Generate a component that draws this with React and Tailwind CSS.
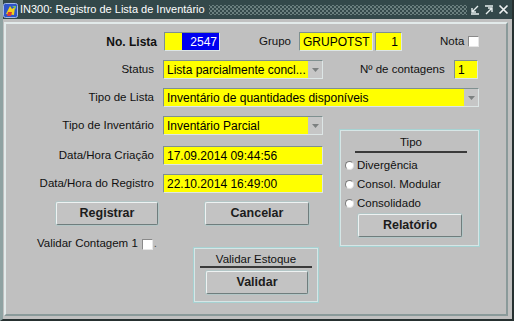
import React from 'react';

const fieldBorder = 'border border-t-[#7f9090] border-l-[#7f9090] border-b-[#dde6e6] border-r-[#dde6e6]';

function Field({ w, children, right }) {
  return (
    <div className={`${w} h-[19px] ${fieldBorder} bg-[#ffff00] flex items-center px-[3px] text-[12px] text-black whitespace-nowrap overflow-hidden ${right ? 'justify-end' : ''}`}>
      {children}
    </div>
  );
}

function Select({ w, children }) {
  return (
    <div className={`${w} h-[19px] ${fieldBorder} flex`}>
      <div className="flex-1 bg-[#ffff00] flex items-center px-[3px] text-[12px] text-black whitespace-nowrap overflow-hidden">
        {children}
      </div>
      <div className="w-[14px] bg-[#c6c6c6] flex items-center justify-center">
        <svg width="7" height="4" viewBox="0 0 7 4"><path d="M0 0h7L3.5 4z" fill="#7c8080" /></svg>
      </div>
    </div>
  );
}

function Btn({ w, children }) {
  return (
    <div className={`${w} h-[23px] bg-[#c3c3c3] rounded-[2px] border border-t-[#eef2f2] border-l-[#eef2f2] border-b-[#6f7d7d] border-r-[#6f7d7d] shadow-[0_0_0_1px_#b3c6c6] flex items-center justify-center font-bold text-[12.5px] text-[#1c1c1c]`}>
      {children}
    </div>
  );
}

function Check() {
  return <div className="w-[11px] h-[11px] bg-white border border-t-[#8a8a8a] border-l-[#8a8a8a] border-b-[#e6e6e6] border-r-[#e6e6e6]" />;
}

function Radio({ label }) {
  return (
    <div className="h-[19px] flex items-center pl-[5px]">
      <div className="w-[9px] h-[9px] rounded-full bg-white border border-t-[#7a7a7a] border-l-[#7a7a7a] border-b-[#e0e0e0] border-r-[#e0e0e0]" />
      <span className="ml-[3px] text-[11.5px] text-[#111]">{label}</span>
    </div>
  );
}

function TitleIcon() {
  return (
    <svg width="15" height="15" viewBox="0 0 15 15">
      <rect x="0.5" y="0.5" width="14" height="14" rx="2" fill="#2f55c8" stroke="#a0b8e8" />
      <path d="M3 11 L7 3 L9 6 L12 4 L11 12 Z" fill="#f2d21a" />
      <path d="M5 9 L9 9 L8 13 L4 13 Z" fill="#d83a3a" />
      <path d="M9 3 L13 3 L13 6 Z" fill="#6cc06c" />
    </svg>
  );
}

export default function App() {
  return (
    <div className="w-[516px] h-[326px] bg-white font-['Liberation_Sans',Arial,sans-serif] text-[11.5px] text-[#111] overflow-hidden">
      <div className="w-[514px] h-[321px] bg-[#c0c0c0] flex flex-col border-r-2 border-b-2 border-[#263030] border-l-[3px] border-l-[#8fa2a2]">
        {/* title bar */}
        <div className="h-[19px] bg-[#33484a] flex items-center shrink-0">
          <div className="mt-[1px]"><TitleIcon /></div>
          <span className="ml-[2px] text-white text-[11px] whitespace-nowrap">IN300: Registro de Lista de Inventário</span>
          <div className="ml-[4px] h-[10px] flex-1 bg-[radial-gradient(#8a9d9d_0.6px,transparent_0.9px),radial-gradient(#8a9d9d_0.6px,transparent_0.9px)] bg-[length:4px_4px] [background-position:0_0,2px_2px]" />
          <div className="flex items-center gap-[4px] ml-[3px] mr-[3px]">
            <svg width="10" height="10" viewBox="0 0 10 10"><path d="M8 1 L2 7 M2 3 V7 H6 M1 9 H9" stroke="#e6eeee" strokeWidth="1.4" fill="none" /></svg>
            <svg width="10" height="10" viewBox="0 0 10 10"><path d="M1 1 H9 M2 9 L8 3 M4 3 H8 V7" stroke="#e6eeee" strokeWidth="1.4" fill="none" /></svg>
            <svg width="11" height="11" viewBox="0 0 11 11"><path d="M1.5 1.5 L9.5 9.5 M9.5 1.5 L1.5 9.5" stroke="#eef2f2" strokeWidth="1.7" fill="none" /></svg>
          </div>
        </div>

        {/* body */}
        <div className="flex-1 pl-[1px] pr-[4px] pt-[3px] pb-[3px]">
          <div className="h-full border-2 border-t-[#e2eaea] border-l-[#e2eaea] border-b-[#8a9a9a] border-r-[#8a9a9a] flex flex-col pt-[8px]">
            {/* row 1 */}
            <div className="flex items-center h-[19px]">
              <span className="w-[151px] text-right font-bold text-[12px]">No. Lista</span>
              <div className={`ml-[7px] w-[56px] h-[19px] ${fieldBorder} flex`}>
                <div className="w-[17px] bg-[#ffff00]" />
                <div className="flex-1 bg-[#0000f0] text-white text-[12px] flex items-center justify-end pr-[2px]">2547</div>
              </div>
              <span className="ml-[39px] w-[31px] whitespace-nowrap">Grupo</span>
              <div className="ml-[9px]"><Field w="w-[74px]">GRUPOTST</Field></div>
              <div className="ml-[2px]"><Field w="w-[27px]" right>1</Field></div>
              <span className="ml-[38px] w-[23px] text-right">Nota</span>
              <div className="ml-[5px]"><Check /></div>
            </div>

            {/* row 2 */}
            <div className="flex items-center h-[19px] mt-[9px]">
              <span className="w-[148px] text-right">Status</span>
              <div className="ml-[9px]"><Select w="w-[160px]">Lista parcialmente concl...</Select></div>
              <span className="ml-[37px] w-[88px] whitespace-nowrap">Nº de contagens</span>
              <div className="ml-[6px]"><Field w="w-[24px]">1</Field></div>
            </div>

            {/* row 3 */}
            <div className="flex items-center h-[19px] mt-[9px]">
              <span className="w-[148px] text-right">Tipo de Lista</span>
              <div className="ml-[9px]"><Select w="w-[316px]">Inventário de quantidades disponíveis</Select></div>
            </div>

            {/* lower */}
            <div className="flex mt-[9px]">
              <div className="w-[317px] flex flex-col">
                <div className="flex items-center h-[19px]">
                  <span className="w-[148px] text-right whitespace-nowrap">Tipo de Inventário</span>
                  <div className="ml-[9px]"><Select w="w-[160px]">Inventário Parcial</Select></div>
                </div>
                <div className="flex items-center h-[19px] mt-[11px]">
                  <span className="w-[148px] text-right whitespace-nowrap">Data/Hora Criação</span>
                  <div className="ml-[9px]"><Field w="w-[160px]">17.09.2014 09:44:56</Field></div>
                </div>
                <div className="flex items-center h-[19px] mt-[9px]">
                  <span className="w-[148px] text-right whitespace-nowrap">Data/Hora do Registro</span>
                  <div className="ml-[9px]"><Field w="w-[160px]">22.10.2014 16:49:00</Field></div>
                </div>
                <div className="flex mt-[9px]">
                  <div className="ml-[50px]"><Btn w="w-[102px]">Registrar</Btn></div>
                  <div className="ml-[47px]"><Btn w="w-[104px]">Cancelar</Btn></div>
                </div>
                <div className="flex items-start mt-[13px]">
                  <div className="w-[187px] flex items-center pl-[31px] h-[12px]">
                    <span className="whitespace-nowrap">Validar Contagem 1</span>
                    <div className="ml-[4px]"><Check /></div>
                    <span className="ml-[1px] text-[#555]">.</span>
                  </div>
                  <div className="mt-[9px] w-[126px] h-[56px] border border-[#a6d2d2] shadow-[inset_0_0_0_1px_#d6e6e6] flex flex-col">
                    <div className="ml-[6px] w-[112px] pt-[4px] text-center h-[18px] leading-[14px] whitespace-nowrap">Validar Estoque</div>
                    <div className="ml-[6px] w-[112px] h-[2px] bg-[#3a3a3a]" />
                    <div className="ml-[12px] mt-[3px]"><Btn w="w-[102px]">Validar</Btn></div>
                  </div>
                </div>
              </div>

              {/* Tipo group */}
              <div className="ml-[16px] mt-[13px] w-[141px] h-[118px] border border-[#a6d2d2] shadow-[inset_0_0_0_1px_#d6e6e6] flex flex-col">
                <div className="ml-[15px] w-[112px] pt-[5px] h-[21px] leading-[14px] text-center">Tipo</div>
                <div className="ml-[15px] w-[112px] h-[2px] bg-[#3a3a3a]" />
                <div className="mt-[3px] flex flex-col">
                  <Radio label="Divergência" />
                  <Radio label="Consol. Modular" />
                  <Radio label="Consolidado" />
                </div>
                <div className="ml-[18px] mt-[1px]"><Btn w="w-[104px]">Relatório</Btn></div>
              </div>
            </div>
          </div>
        </div>
      </div>
    </div>
  );
}
